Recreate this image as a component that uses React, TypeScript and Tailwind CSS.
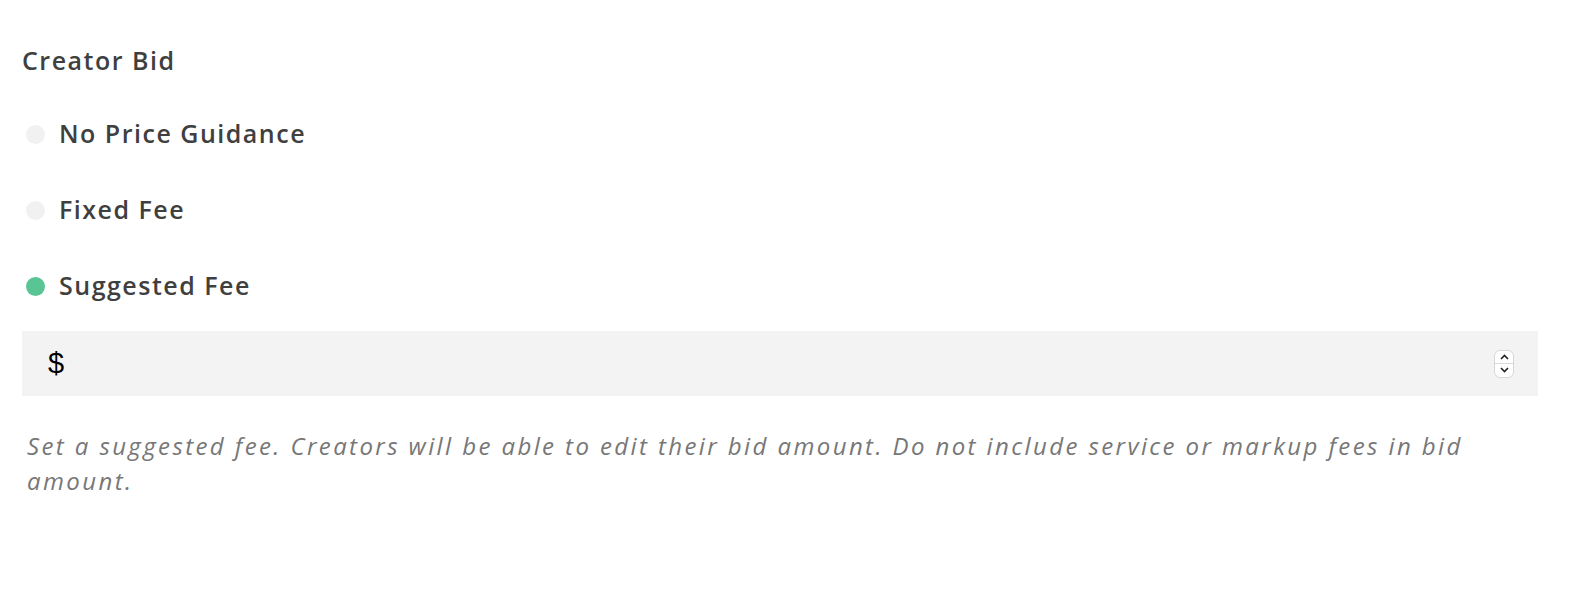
import React from "react";

function Radio({ label, checked }: { label: string; checked?: boolean }) {
  return (
    <div className="flex items-center h-[40px]">
      <span
        className={
          "ml-[26px] w-[19px] h-[19px] rounded-full shrink-0 " +
          (checked ? "bg-[#5ac594]" : "bg-[#f1f1f1]")
        }
      />
      <span className="ml-[14px] text-[25px] font-semibold text-[#3f3f3f] tracking-[1.5px]">
        {label}
      </span>
    </div>
  );
}

export default function App() {
  return (
    <div
      className="w-[1572px] h-[596px] bg-white"
      style={{ fontFamily: "'Open Sans', Lato, sans-serif" }}
    >
      <div className="pt-[41px] pl-[22px] pr-[34px]">
        <div className="h-[40px] flex items-center text-[25px] font-semibold text-[#3f3f3f] tracking-[1.5px]">
          Creator Bid
        </div>
      </div>
      <div className="mt-[33px] flex flex-col gap-[36px]">
        <Radio label="No Price Guidance" />
        <Radio label="Fixed Fee" />
        <Radio label="Suggested Fee" checked />
      </div>
      <div className="mt-[25px] ml-[22px] w-[1516px] h-[65px] bg-[#f3f3f3] flex items-center pl-[26px] pr-[24px]">
        <span
          className="text-[29px] text-black"
          style={{ fontFamily: "'Liberation Sans', Arial, sans-serif" }}
        >
          $
        </span>
        <div className="ml-auto w-[20px] h-[28px] rounded-[6px] bg-white border border-[#d6d6d6] flex flex-col">
          <div className="flex-1 flex items-center justify-center border-b border-[#dcdcdc]">
            <svg width="9" height="6" viewBox="0 0 9 6">
              <path d="M1 5 L4.5 1.5 L8 5" fill="none" stroke="#222" strokeWidth="1.6" />
            </svg>
          </div>
          <div className="flex-1 flex items-center justify-center">
            <svg width="9" height="6" viewBox="0 0 9 6">
              <path d="M1 1 L4.5 4.5 L8 1" fill="none" stroke="#222" strokeWidth="1.6" />
            </svg>
          </div>
        </div>
      </div>
      <p className="mt-[32px] ml-[27px] w-[1511px] text-[24px] italic leading-[35px] text-[#777777] tracking-[2.4px]">
        Set a suggested fee. Creators will be able to edit their bid amount. Do not include service or markup fees in bid amount.
      </p>
    </div>
  );
}
